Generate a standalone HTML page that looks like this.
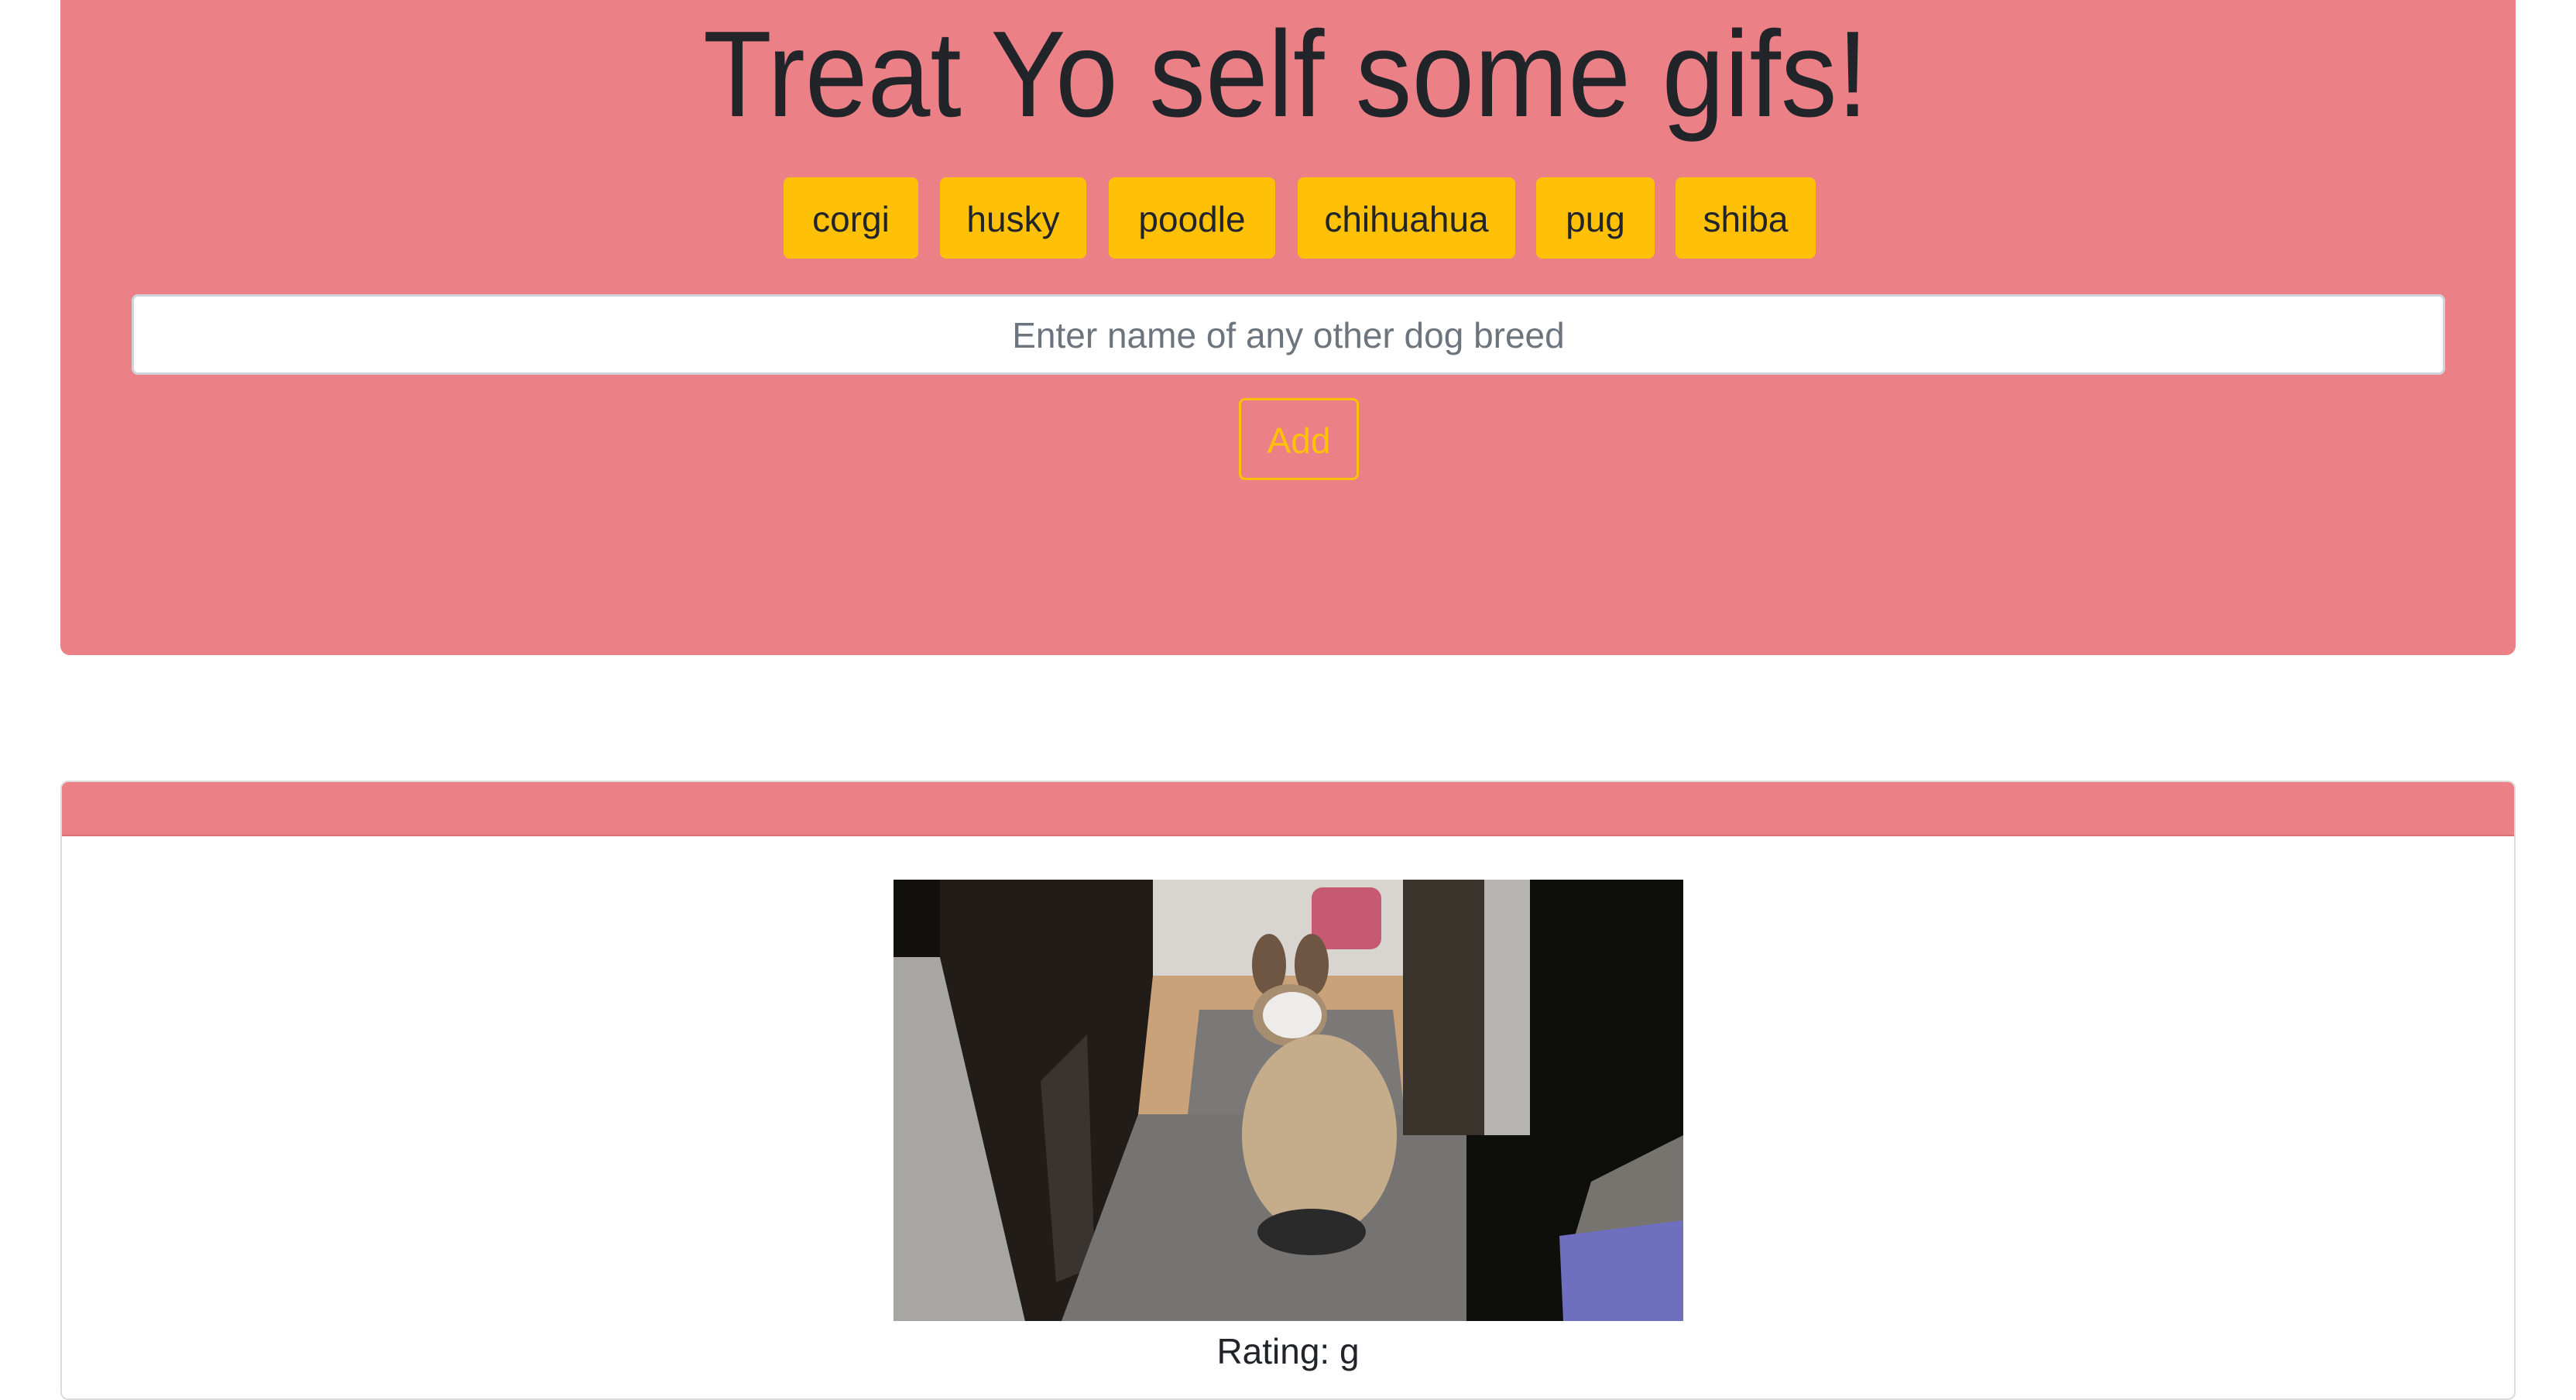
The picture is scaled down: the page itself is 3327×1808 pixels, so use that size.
<!DOCTYPE html>
<html><head><meta charset="utf-8"><style>
*{box-sizing:border-box;margin:0;padding:0}
body{width:3327px;height:1796px;background:#fff;position:relative;overflow:hidden;font-family:"Liberation Sans",sans-serif;color:#212529}
.jumbo{position:absolute;left:78px;top:0;width:3171px;height:846px;background:#ec8087;border-radius:0 0 12px 12px}
.btn{position:absolute;top:229px;height:105px;background:#ffc107;border-radius:8px;font-size:46px;line-height:108px;text-align:center;color:#212529}
.input{position:absolute;left:170px;top:380px;width:2988px;height:104px;background:#fff;border:3px solid #d0d4da;border-radius:8px;font-size:46px;line-height:100px;text-align:center;color:#6c757d}
.add{position:absolute;left:1600px;top:514px;width:155px;height:106px;border:3px solid #ffc107;border-radius:8px;color:#ffc107;font-size:46px;line-height:104px;text-align:center}
.card{position:absolute;left:78px;top:1008px;width:3171px;height:800px;border:2px solid #dcdcdc;border-radius:10px;overflow:hidden}
.chead{height:70px;background:#ec8087;border-bottom:2px solid #d87078}
.rating{position:absolute;left:0;width:3327px;top:1718px;text-align:center;font-size:46px}
</style></head><body>
<div class="jumbo"></div>
<svg style="position:absolute;left:0;top:0" width="3327" height="200">
<text x="908" y="150" font-family="Liberation Sans" font-size="158" fill="#212529" textLength="1505" lengthAdjust="spacingAndGlyphs">Treat Yo self some gifs!</text>
</svg>
<div class="btn" style="left:1012px;width:174px">corgi</div>
<div class="btn" style="left:1214px;width:189px">husky</div>
<div class="btn" style="left:1432px;width:215px">poodle</div>
<div class="btn" style="left:1676px;width:281px">chihuahua</div>
<div class="btn" style="left:1984px;width:153px">pug</div>
<div class="btn" style="left:2164px;width:181px">shiba</div>
<div class="input">Enter name of any other dog breed</div>
<div class="add">Add</div>
<div class="card"><div class="chead"></div></div>
<svg style="position:absolute;left:1154px;top:1136px" width="1020" height="570" viewBox="0 0 1020 570">
<rect width="1020" height="570" fill="#12110d"/>
<polygon points="0,100 60,100 170,570 0,570" fill="#a8a6a3"/>
<polygon points="60,0 335,0 335,300 260,570 170,570 60,100" fill="#221c18"/>
<polygon points="190,260 250,200 260,500 210,520" fill="#3a3430"/>
<rect x="335" y="0" width="323" height="124" fill="#d8d4d0"/>
<polygon points="335,124 724,124 757,303 316,303" fill="#c9a27a"/>
<polygon points="395,168 645,168 660,303 380,303" fill="#7a7978"/>
<polygon points="316,303 757,303 849,570 217,570" fill="#767472"/>
<rect x="540" y="10" width="90" height="80" fill="#c65a72" rx="14"/>
<rect x="658" y="0" width="105" height="330" fill="#3a332b"/>
<rect x="763" y="0" width="59" height="330" fill="#b6b4b1"/>
<rect x="740" y="330" width="100" height="240" fill="#0e0e0a"/>
<rect x="822" y="0" width="198" height="570" fill="#0e0e0a"/>
<polygon points="901,390 1020,330 1020,453 880,460" fill="#777470"/>
<polygon points="860,460 1020,440 1020,570 865,570" fill="#6f6fbf"/>
<ellipse cx="485" cy="110" rx="22" ry="40" fill="#6e5642"/>
<ellipse cx="540" cy="110" rx="22" ry="40" fill="#6e5642"/>
<ellipse cx="512" cy="175" rx="48" ry="40" fill="#a88e70"/>
<ellipse cx="515" cy="175" rx="38" ry="30" fill="#eeeceb"/>
<ellipse cx="550" cy="330" rx="100" ry="130" fill="#c5ad8b"/>
<ellipse cx="540" cy="455" rx="70" ry="30" fill="#2a2a2a"/>
</svg>
<div class="rating">Rating: g</div>
</body></html>
